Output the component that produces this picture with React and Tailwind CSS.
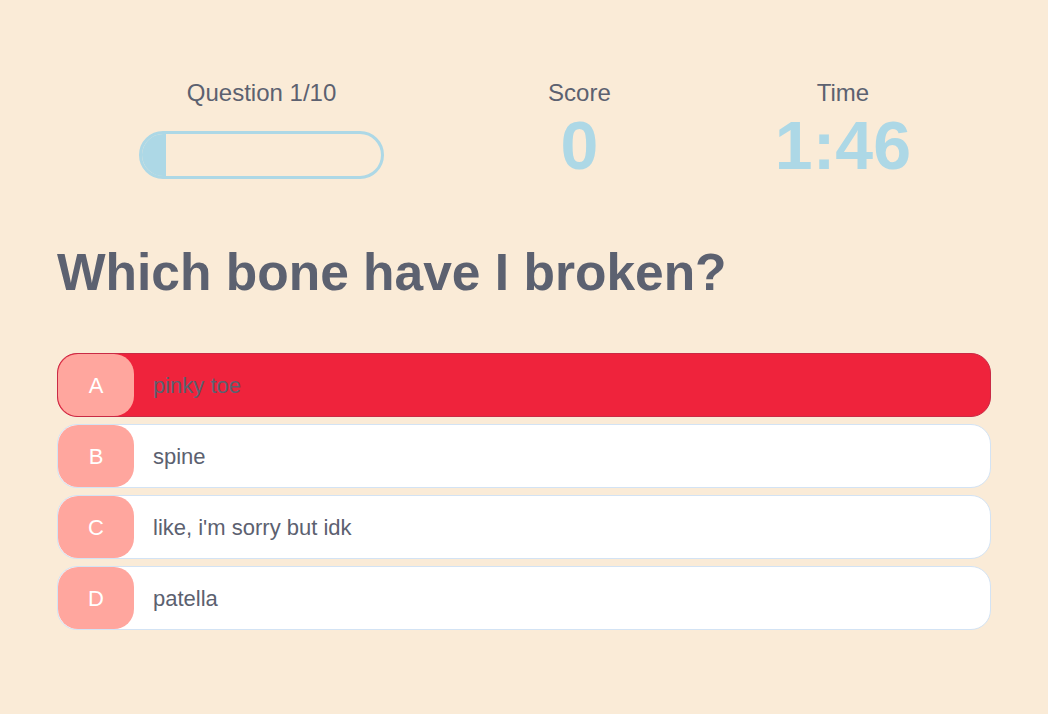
const options = [
  { letter: "A", text: "pinky toe", selected: true },
  { letter: "B", text: "spine" },
  { letter: "C", text: "like, i'm sorry but idk" },
  { letter: "D", text: "patella" },
];

function Option({ letter, text, selected }) {
  return (
    <button
      className={
        "flex h-16 w-full items-center rounded-[20px] border text-left " +
        (selected ? "border-[#c92a45] bg-[#ef233c]" : "border-[#d3e3f4] bg-white")
      }
    >
      <span className="flex h-full w-[76px] shrink-0 items-center justify-center rounded-[20px] bg-[#ffa69e] pt-[2px] text-[22px] text-white">
        {letter}
      </span>
      <span className="pt-[2px] pl-[19px] text-[22px] text-[#5c6170]">{text}</span>
    </button>
  );
}

export default function App() {
  return (
    <div
      className="min-h-screen bg-[#faebd7]"
      style={{ fontFamily: '"Liberation Sans", Arial, sans-serif' }}
    >
      <div className="px-[57px] pt-[77px]">
        <div className="-mr-[2px] flex items-start justify-around text-[#5c6170]">
          <div className="flex w-[245px] flex-col items-center">
            <p className="text-2xl">Question 1/10</p>
            <div className="mt-[22px] h-12 w-full rounded-full border-[3px] border-[#add8e6]">
              <div className="h-full w-[24px] rounded-l-full rounded-r-[6px] bg-[#add8e6]" />
            </div>
          </div>
          <div className="flex flex-col items-center">
            <p className="text-2xl">Score</p>
            <p className="mt-[2px] text-[68px] leading-none font-bold text-[#add8e6]">0</p>
          </div>
          <div className="flex flex-col items-center">
            <p className="text-2xl">Time</p>
            <p className="mt-[2px] text-[68px] leading-none font-bold text-[#add8e6]">1:46</p>
          </div>
        </div>

        <h1 className="mt-[68px] text-[51.5px] leading-none font-bold text-[#5c6170]">
          Which bone have I broken?
        </h1>

        <div className="mt-[54px] flex flex-col gap-[7px]">
          {options.map((o) => (
            <Option key={o.letter} {...o} />
          ))}
        </div>
      </div>
    </div>
  );
}
